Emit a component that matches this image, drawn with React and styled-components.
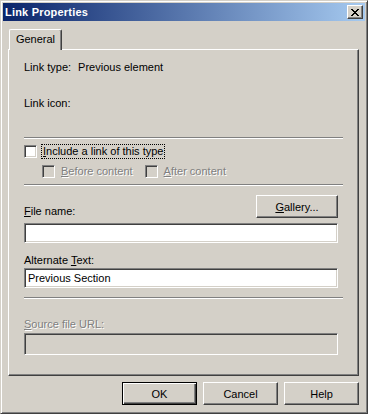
import React from "react";
import styled, { createGlobalStyle, css } from "styled-components";

const face = "#d4d0c8";
const shadow = "#808080";
const darkShadow = "#404040";
const uiFont = `"Liberation Sans", Arial, sans-serif`;

const GlobalStyle = createGlobalStyle`
  html, body {
    margin: 0;
    padding: 0;
    background: ${face};
  }
  * { box-sizing: border-box; }
`;

const raised = css`
  border: 1px solid;
  border-color: #fff ${darkShadow} ${darkShadow} #fff;
  box-shadow: inset -1px -1px 0 ${shadow}, inset 1px 1px 0 ${face};
`;

const sunken = css`
  border: 1px solid;
  border-color: ${shadow} #fff #fff ${shadow};
  box-shadow: inset 1px 1px 0 ${darkShadow}, inset -1px -1px 0 ${face};
`;

const Window = styled.div`
  width: 368px;
  height: 414px;
  background: ${face};
  border: 1px solid;
  border-color: ${face} ${darkShadow} ${darkShadow} ${face};
  box-shadow: inset 1px 1px 0 #fff, inset -1px -1px 0 ${shadow};
  padding: 2px;
  display: flex;
  flex-direction: column;
  font-family: ${uiFont};
  font-size: 11px;
  color: #000;
`;

const TitleBar = styled.div`
  height: 18px;
  display: flex;
  align-items: center;
  justify-content: space-between;
  padding: 0 2px 0 2px;
  background: linear-gradient(to right, #0a246a, #a6caf0);
`;

const Title = styled.span`
  color: #fff;
  font-weight: bold;
  font-size: 11px;
  letter-spacing: 0.2px;
`;

const CloseButton = styled.div`
  ${raised};
  width: 16px;
  height: 14px;
  background: ${face};
  display: flex;
  align-items: center;
  justify-content: center;
`;

const Body = styled.div`
  flex: 1;
  display: flex;
  flex-direction: column;
  padding: 8px 6px 0 5px;
`;

const TabStrip = styled.div`
  display: flex;
  height: 20px;
  position: relative;
  z-index: 1;
`;

const Tab = styled.div`
  margin-left: 1px;
  width: 53px;
  height: 21px;
  padding-top: 3px;
  text-align: center;
  background: ${face};
  border-left: 1px solid #fff;
  border-top: 1px solid #fff;
  border-right: 1px solid ${darkShadow};
  box-shadow: inset -1px 0 0 ${shadow};
  border-top-left-radius: 2px;
  border-top-right-radius: 2px;
`;

const Panel = styled.div`
  height: 327px;
  border: 1px solid;
  border-color: #fff ${darkShadow} ${darkShadow} #fff;
  box-shadow: inset -1px -1px 0 ${shadow};
  padding: 0 20px 0 15px;
  display: flex;
  flex-direction: column;
`;

const Label = styled.div`
  height: 13px;
  line-height: 13px;
  margin-top: ${(p) => p.$top || 0}px;
  display: flex;
  gap: ${(p) => p.$gap || 0}px;
  color: ${(p) => (p.$disabled ? shadow : "#000")};
  text-shadow: ${(p) => (p.$disabled ? "1px 1px 0 #fff" : "none")};
`;

const Key = styled.span`
  text-decoration: underline;
`;

const Separator = styled.div`
  margin-top: ${(p) => p.$top}px;
  margin-right: -5px;
  height: 2px;
  border-top: 1px solid ${shadow};
  border-bottom: 1px solid #fff;
`;

const CheckRow = styled.div`
  display: flex;
  align-items: center;
  margin-top: ${(p) => p.$top}px;
  margin-left: ${(p) => p.$indent || 0}px;
  gap: 5px;
`;

const Box = styled.div`
  ${sunken};
  width: 13px;
  height: 13px;
  flex: none;
  background: ${(p) => (p.$disabled ? face : "#fff")};
`;

const CheckLabel = styled.span`
  line-height: 13px;
  padding: 0 1px;
  margin-right: ${(p) => p.$gap || 0}px;
  color: ${(p) => (p.$disabled ? shadow : "#000")};
  text-shadow: ${(p) => (p.$disabled ? "1px 1px 0 #fff" : "none")};
  outline: ${(p) => (p.$focus ? "1px dotted #000" : "none")};
`;

const FieldHead = styled.div`
  display: flex;
  justify-content: space-between;
  align-items: flex-end;
  margin-top: 9px;
`;

const Input = styled.div`
  ${sunken};
  height: ${(p) => p.$h || 20}px;
  margin-top: ${(p) => p.$top}px;
  background: ${(p) => (p.$disabled ? face : "#fff")};
  padding: 0 3px;
  line-height: 18px;
  white-space: nowrap;
`;

const Button = styled.div`
  ${raised};
  width: ${(p) => p.$w || 75}px;
  height: 23px;
  display: flex;
  align-items: center;
  justify-content: center;
  background: ${face};
  ${(p) =>
    p.$default &&
    css`
      border-color: #000;
      box-shadow: inset 1px 1px 0 #fff, inset -1px -1px 0 ${darkShadow},
        inset -2px -2px 0 ${shadow};
    `}
`;

const Footer = styled.div`
  display: flex;
  justify-content: flex-end;
  gap: 6px;
  margin-top: 6px;
`;

function App() {
  return (
    <>
      <GlobalStyle />
      <Window>
        <TitleBar>
          <Title>Link Properties</Title>
          <CloseButton>
            <svg width="8" height="7" viewBox="0 0 8 7">
              <path d="M0 0h2v1h1v1h2V1h1V0h2v1H7v1H6v1H5v1h1v1h1v1h1v1H6V6H5V5H3v1H2v1H0V6h1V5h1V4h1V3H2V2H1V1H0z" fill="#000" />
            </svg>
          </CloseButton>
        </TitleBar>
        <Body>
          <TabStrip>
            <Tab>General</Tab>
          </TabStrip>
          <Panel>
            <Label $top={11} $gap={7}>
              <span>Link type:</span>
              <span>Previous element</span>
            </Label>
            <Label $top={23}>Link icon:</Label>
            <Separator $top={27} />
            <CheckRow $top={6}>
              <Box />
              <CheckLabel $focus>
                <Key>I</Key>nclude a link of this type
              </CheckLabel>
            </CheckRow>
            <CheckRow $top={7} $indent={18}>
              <Box $disabled />
              <CheckLabel $disabled $gap={6}>
                <Key>B</Key>efore content
              </CheckLabel>
              <Box $disabled />
              <CheckLabel $disabled>
                <Key>A</Key>fter content
              </CheckLabel>
            </CheckRow>
            <Separator $top={6} />
            <FieldHead>
              <Label>
                <span>
                  <Key>F</Key>ile name:
                </span>
              </Label>
              <Button $w={82}>
                <span>
                  <Key>G</Key>allery...
                </span>
              </Button>
            </FieldHead>
            <Input $top={5} />
            <Label $top={11}>
              <span>
                Alternate <Key>T</Key>ext:
              </span>
            </Label>
            <Input $top={1}>Previous Section</Input>
            <Separator $top={9} />
            <Label $top={19} $disabled>
              <span>
                <Key>S</Key>ource file URL:
              </span>
            </Label>
            <Input $top={2} $h={22} $disabled />
          </Panel>
          <Footer>
            <Button $default>OK</Button>
            <Button>Cancel</Button>
            <Button>Help</Button>
          </Footer>
        </Body>
      </Window>
    </>
  );
}

export default App;
